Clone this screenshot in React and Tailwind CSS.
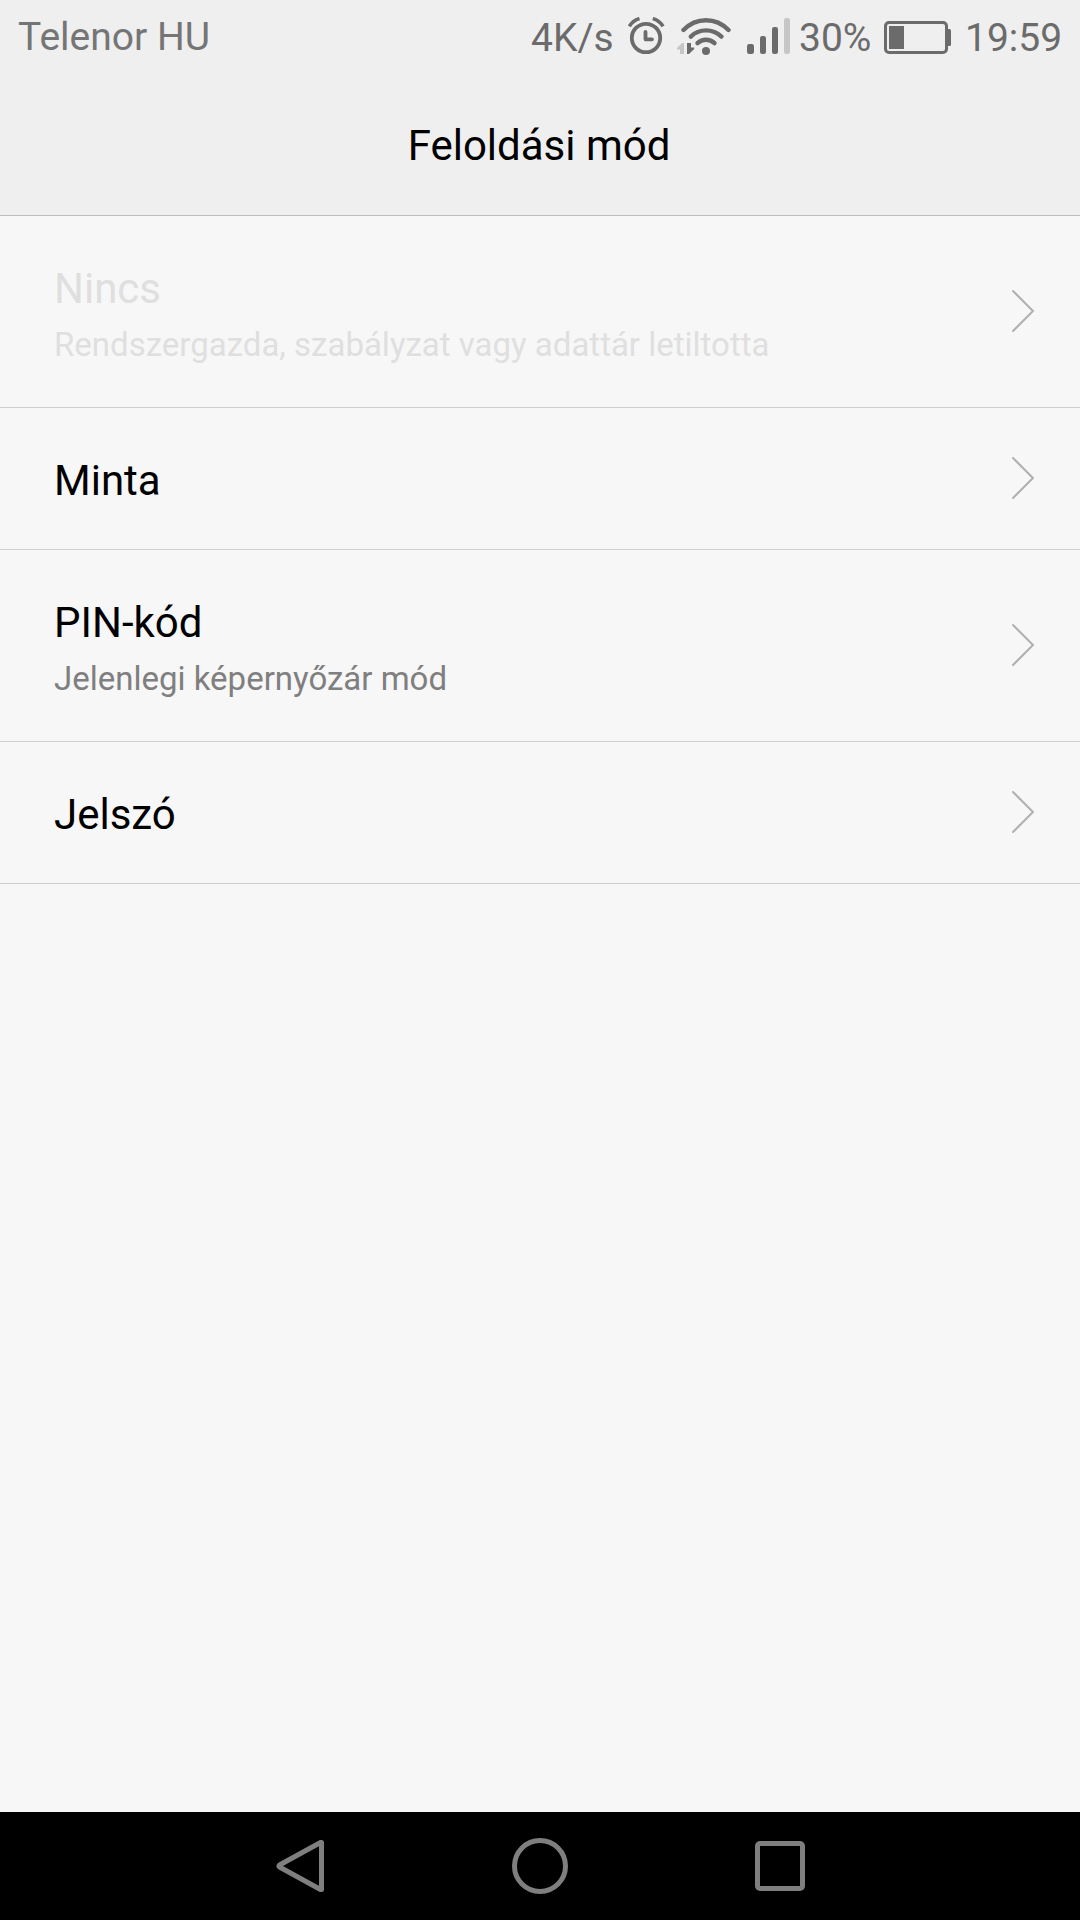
import React from 'react';

const options = [
  { title: 'Nincs', summary: 'Rendszergazda, szabályzat vagy adattár letiltotta', disabled: true },
  { title: 'Minta' },
  { title: 'PIN-kód', summary: 'Jelenlegi képernyőzár mód' },
  { title: 'Jelszó' },
];

function AlarmIcon() {
  return (
    <svg width="38" height="38" viewBox="0 0 38 38" fill="none" stroke="#6b6b6b" className="ml-4 shrink-0">
      <circle cx="18" cy="21" r="14.2" strokeWidth="3.8" />
      <path d="M17.5 15v7.3h6.5" strokeWidth="3.8" strokeLinecap="round" strokeLinejoin="round" />
      <path d="M1.3 9.4Q4.8 3.6 11.5 1.6" strokeWidth="3.6" />
      <path d="M35 9.4Q31.5 3.6 24.8 1.6" strokeWidth="3.6" />
    </svg>
  );
}

function WifiIcon() {
  return (
    <svg width="54" height="38" viewBox="0 0 54 38" fill="none" className="ml-[11px] shrink-0">
      <g stroke="#6b6b6b" strokeWidth="4.4" strokeLinecap="round">
        <path d="M6.5 13Q16 3.2 29 3.2T51.5 13" />
        <path d="M13.8 19.6Q20 13.4 29 13.4T44.5 19.6" />
        <path d="M20.5 26.2Q24 22.8 29 22.8T37.5 26.2" />
      </g>
      <circle cx="29" cy="34" r="4" fill="#6b6b6b" />
      {/* upload / download activity */}
      <path d="M7 26v11H3v-4.5H0V31l5-5z" fill="#c6c6c6" />
      <path d="M10 26h4v4.5h3.2V32L12 37h-2z" fill="#6b6b6b" />
    </svg>
  );
}

function SignalIcon() {
  return (
    <svg width="44" height="38" viewBox="0 0 44 38" fill="#6b6b6b" className="ml-4 shrink-0">
      <rect x="0" y="27" width="7" height="10" rx="2.2" />
      <rect x="13" y="19" width="6" height="18" rx="2.2" />
      <rect x="25" y="10" width="6" height="27" rx="2.2" />
      <rect x="37" y="1" width="6" height="36" rx="2.2" fill="#c6c6c6" />
    </svg>
  );
}

function BatteryIcon() {
  return (
    <svg width="67" height="34" viewBox="0 0 67 34" className="shrink-0">
      <rect x="1.5" y="1.5" width="61" height="30" rx="3.5" fill="none" stroke="#6b6b6b" strokeWidth="3" />
      <path d="M64 8h1.5q1.5 0 1.5 1.5v14q0 1.5-1.5 1.5H64z" fill="#6b6b6b" />
      <rect x="5" y="5" width="15" height="23" fill="#6b6b6b" />
    </svg>
  );
}

function StatusBar() {
  return (
    <div className="flex h-[72px] items-start pl-[18px] text-[39px] leading-[46px]">
      <span className="pt-3.5 text-[#757575]">Telenor HU</span>
      <div className="ml-auto flex w-[549px] items-start text-[#6b6b6b]">
        <span className="w-[81px] pt-[15px] whitespace-nowrap">4K/s</span>
        <div className="flex pt-[17px]">
          <AlarmIcon />
          <WifiIcon />
          <SignalIcon />
        </div>
        <span className="ml-2 w-[85px] pt-[15px] whitespace-nowrap">30%</span>
        <div className="pt-[21px]">
          <BatteryIcon />
        </div>
        <span className="ml-3.5 pt-[15px] whitespace-nowrap">19:59</span>
      </div>
    </div>
  );
}

function OptionRow({ title, summary, disabled }) {
  return (
    <li
      className={`flex items-center justify-between border-b border-[#cfcfcf] pr-[45px] pl-[54px] ${
        summary ? 'h-[192px]' : 'h-[142px]'
      }`}
    >
      <div className="self-start pt-12">
        <p className={`text-[42px] leading-[50px] ${disabled ? 'text-[#dfdfdf]' : 'text-black'}`}>{title}</p>
        {summary && (
          <p className={`mt-[11px] text-[33px] leading-10 ${disabled ? 'text-[#dfdfdf]' : 'text-[#7f7f7f]'}`}>
            {summary}
          </p>
        )}
      </div>
      <svg width="23" height="43" viewBox="0 0 23 43" fill="none" stroke="#b0b0b0" strokeWidth="2" strokeLinecap="round">
        <path d="M1 1L21 21L1 41" />
      </svg>
    </li>
  );
}

function NavBar() {
  return (
    <nav className="flex h-[108px] items-center bg-black pl-[275px]">
      <svg width="50" height="56" viewBox="0 0 50 56" fill="none" stroke="#7f7f7f" strokeWidth="5" strokeLinejoin="round">
        <path d="M46.5 4.5v47q0 0-1 0L4.5 29q-1-1 0-2L45.5 4.5z" />
      </svg>
      <svg width="56" height="56" viewBox="0 0 56 56" fill="none" stroke="#7f7f7f" strokeWidth="5" className="ml-[187px]">
        <circle cx="28" cy="28" r="25.5" />
      </svg>
      <div className="ml-[187px] size-[50px] rounded-[5px] border-5 border-[#7f7f7f]" />
    </nav>
  );
}

export default function App() {
  return (
    <div className="flex h-[1920px] w-[1080px] flex-col overflow-hidden bg-[#f7f7f7] font-['Roboto',sans-serif]">
      <header className="h-[216px] border-b border-[#bdbdbd] bg-[#efefef]">
        <StatusBar />
        <h1 className="pt-[49px] pr-0.5 text-center text-[42px] leading-[50px] text-black">Feloldási mód</h1>
      </header>
      <ul className="flex-1">
        {options.map((option) => (
          <OptionRow key={option.title} {...option} />
        ))}
      </ul>
      <NavBar />
    </div>
  );
}
